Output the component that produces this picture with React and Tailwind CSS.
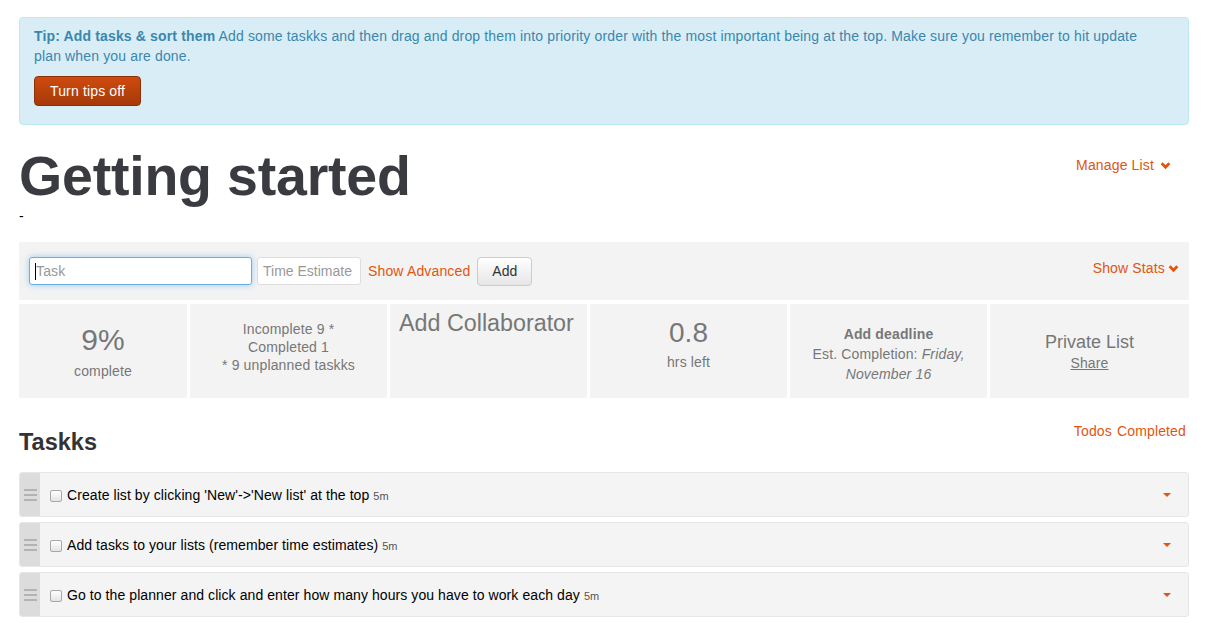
import React from "react";

const orange = "text-[#e0560f]";

function Chevron({ className = "" }) {
  return (
    <svg viewBox="0 0 10 8" className={className} fill="none" stroke="currentColor" strokeWidth="2.6">
      <path d="M1.5 2 L5 5.5 L8.5 2" />
    </svg>
  );
}

function TaskRow({ text }) {
  return (
    <div className="flex h-[45px] rounded-[3px] border border-[#e6e6e6] bg-[#f4f4f4] overflow-hidden">
      <div className="w-[20px] bg-[#dcdcdc] flex flex-col items-center justify-center gap-[3px]">
        <span className="block w-[13px] h-[2px] bg-[#b3b3b3]" />
        <span className="block w-[13px] h-[2px] bg-[#b3b3b3]" />
        <span className="block w-[13px] h-[2px] bg-[#b3b3b3]" />
      </div>
      <div className="flex-1 flex items-center pl-[10px] pr-[17px]">
        <span className="w-[12px] h-[12px] mt-[3px] rounded-[2px] border border-[#a8a8a8] bg-gradient-to-b from-white to-[#e4e4e4] mr-[5px]" />
        <span className="text-[14px] text-black tracking-[0.08px]">{text}</span>
        <span className="text-[11px] text-[#555] ml-[4px] mt-[2px] tracking-normal">5m</span>
        <span className="ml-auto w-0 h-0 border-l-[4px] border-r-[4px] border-t-[4px] border-l-transparent border-r-transparent border-t-[#e0560f]" />
      </div>
    </div>
  );
}

export default function App() {
  return (
    <div className="bg-white min-h-[624px] font-['Liberation_Sans',Arial,sans-serif] text-[14px] leading-[20px] tracking-[0.15px]">
      <div className="w-[1170px] ml-[19px] pt-[17px]">
        {/* tip */}
        <div className="bg-[#d9edf7] border border-[#bce8f1] rounded-[4px] text-[#3a87ad] pl-[14px] pr-[35px] pt-[8px] pb-[18px]">
          <p>
            <b>Tip: Add tasks &amp; sort them</b> Add some taskks and then drag and drop them into priority order with the most important being at the top. Make sure you remember to hit update plan when you are done.
          </p>
          <button className="mt-[10px] h-[30px] px-[15px] rounded-[4px] border border-[#8d3008] bg-gradient-to-b from-[#cf4a0e] to-[#a53a09] text-white text-[14px]">
            Turn tips off
          </button>
        </div>

        {/* heading */}
        <div className="flex items-start justify-between">
          <div>
            <h1 className="text-[55.5px] leading-[60px] font-bold text-[#3a3b41] pt-[21px] tracking-[-0.2px]">Getting started</h1>
            <div className="text-black text-[14px] leading-[20px]">-</div>
          </div>
          <a className={`${orange} flex items-center gap-[6px] mt-[30px] mr-[18px]`}>
            Manage List <Chevron className="w-[11px] h-[9px]" />
          </a>
        </div>

        {/* add bar */}
        <div className="mt-[16px] bg-[#f3f3f3] h-[58px] flex items-center px-[10px]">
          <div className="w-[223px] h-[28px] rounded-[3px] border border-[#66afe9] shadow-[0_0_6px_rgba(102,175,233,0.6)] bg-white flex items-center px-[5px]">
            <span className="w-px h-[17px] bg-black" />
            <span className="text-[#999] text-[14px]">Task</span>
          </div>
          <div className="ml-[5px] w-[104px] h-[28px] rounded-[3px] border border-[#ddd] bg-white flex items-center px-[5px] text-[#999] text-[14px] overflow-hidden whitespace-nowrap tracking-normal">
            Time Estimate
          </div>
          <a className={`${orange} ml-[7px]`}>Show Advanced</a>
          <button className="ml-[7px] w-[55px] h-[29px] rounded-[4px] border border-[#ccc] bg-gradient-to-b from-white to-[#e6e6e6] text-[#333] text-[14px]">
            Add
          </button>
          <a className={`${orange} ml-auto mt-[-6px] flex items-center gap-[3px]`}>
            Show Stats <Chevron className="w-[11px] h-[9px]" />
          </a>
        </div>

        {/* stats */}
        <div className="mt-[4px] grid grid-cols-[168px_197px_197px_197px_197px_199px] gap-[3px] h-[94px] text-[#777] text-center">
          <div className="bg-[#f3f3f3] pt-[18px]">
            <div className="text-[30px] leading-[36px]">9%</div>
            <div className="mt-[3px]">complete</div>
          </div>
          <div className="bg-[#f3f3f3] pt-[16px] leading-[18px]">
            <div>Incomplete 9 *</div>
            <div>Completed 1</div>
            <div>* 9 unplanned taskks</div>
          </div>
          <div className="bg-[#f3f3f3] pt-[5px] text-[23.3px] leading-[28px] text-left pl-[9px] tracking-normal">Add Collaborator</div>
          <div className="bg-[#f3f3f3] pt-[13px]">
            <div className="text-[28px] leading-[32px] tracking-normal">0.8</div>
            <div className="mt-[3px]">hrs left</div>
          </div>
          <div className="bg-[#f3f3f3] pt-[20px]">
            <div className="font-bold">Add deadline</div>
            <div>Est. Completion: <i>Friday,</i></div>
            <div><i>November 16</i></div>
          </div>
          <div className="bg-[#f3f3f3] pt-[27px]">
            <div className="text-[18px] leading-[22px] tracking-normal">Private List</div>
            <div className="underline">Share</div>
          </div>
        </div>

        {/* taskks */}
        <div className="flex items-start justify-between mt-[24px]">
          <h2 className="text-[23.5px] leading-[36px] font-bold text-[#333] mt-[2px] tracking-normal">Taskks</h2>
          <div className={`${orange} mt-[-1px] mr-[3px] flex gap-[5px]`}>
            <a>Todos</a>
            <a>Completed</a>
          </div>
        </div>
        <div className="mt-[12px] flex flex-col gap-[5px]">
          <TaskRow text="Create list by clicking 'New'->'New list' at the top" />
          <TaskRow text="Add tasks to your lists (remember time estimates)" />
          <TaskRow text="Go to the planner and click and enter how many hours you have to work each day" />
        </div>
      </div>
    </div>
  );
}
